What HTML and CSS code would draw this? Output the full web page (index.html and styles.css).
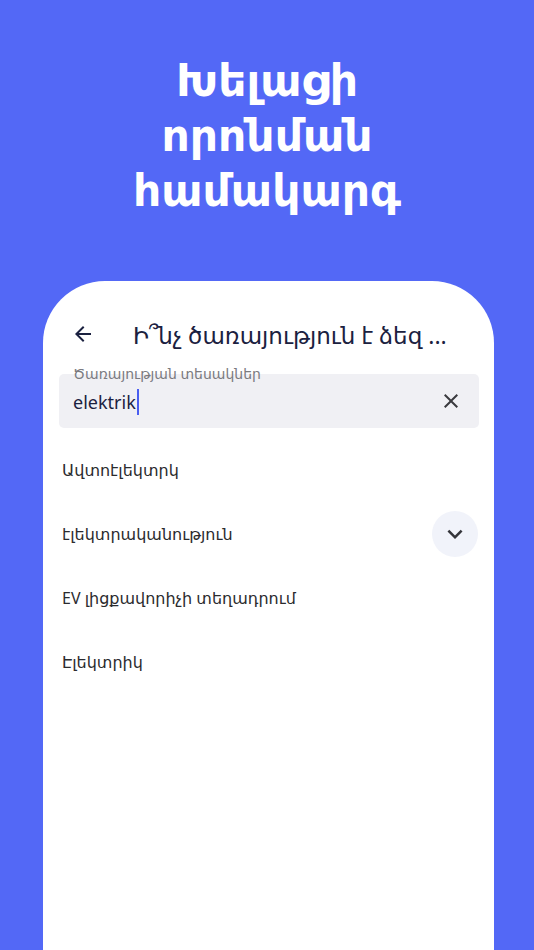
FILE: index.html
```html
<!DOCTYPE html>
<html lang="hy">
<head>
    <meta charset="UTF-8">
    <meta name="viewport" content="width=device-width, initial-scale=1.0">
    <title>Խելացի որոնման համակարգ</title>
    <link rel="stylesheet" href="styles.css">
</head>
<body>
    <h1 class="headline">Խելացի<br>որոնման<br>համակարգ</h1>

    <div class="phone">
        <div class="top-bar">
            <span class="back">
                <svg width="24" height="24" viewBox="0 0 24 24"><path d="M20 11H7.83l5.59-5.59L12 4l-8 8 8 8 1.41-1.41L7.83 13H20v-2z" fill="#1b2140"/></svg>
            </span>
            <span class="top-title">Ի՞նչ ծառայություն է ձեզ ...</span>
        </div>

        <div class="search">
            <span class="search-label">Ծառայության տեսակներ</span>
            <span class="search-value">elektrik<span class="caret"></span></span>
            <span class="clear">
                <svg width="24" height="24" viewBox="0 0 24 24"><path d="M19 6.41 17.59 5 12 10.59 6.41 5 5 6.41 10.59 12 5 17.59 6.41 19 12 13.41 17.59 19 19 17.59 13.41 12z" fill="#3a3a3e"/></svg>
            </span>
        </div>

        <ul class="results">
            <li>Ավտոէլեկտրկ</li>
            <li>էլեկտրականություն
                <span class="more">
                    <svg width="30" height="30" viewBox="0 0 24 24"><path d="M7.41 8.59 12 13.17l4.59-4.58L18 10l-6 6-6-6z" fill="#34343a"/></svg>
                </span>
            </li>
            <li>EV լիցքավորիչի տեղադրում</li>
            <li>Էլեկտրիկ</li>
        </ul>
    </div>
</body>
</html>
```

FILE: styles.css
```css
html, body {
    height: 100%;
}

body {
    margin: 0;
    padding: 0;
    background: #5368f6;
    font-family: "Noto Sans", "DejaVu Sans", sans-serif;
    overflow: hidden;
    display: flex;
    flex-direction: column;
}

.headline {
    margin: 0;
    padding-top: 52px;
    height: 281px;
    flex-shrink: 0;
    box-sizing: border-box;
    text-align: center;
    color: #fff;
    font-size: 44px;
    line-height: 55px;
    font-weight: 600;
}

.phone {
    flex: 1;
    margin: 0 40px 0 43px;
    background: #fff;
    border-radius: 62px 62px 0 0;
    padding: 0 15px 0 16px;
}

.top-bar {
    display: flex;
    align-items: center;
    height: 106px;
}

.back {
    display: flex;
    width: 24px;
    height: 24px;
    margin-left: 12px;
}

.top-title {
    margin-left: 38px;
    font-size: 23px;
    color: #1b2140;
    white-space: nowrap;
    padding-top: 2px;
}

.search {
    position: relative;
    display: flex;
    align-items: center;
    height: 54px;
    background: #f0f0f4;
    border-radius: 5px;
    padding: 0 16px 0 14px;
    margin-top: -13px;
}

.search-label {
    position: absolute;
    left: 14px;
    top: -9px;
    font-size: 14px;
    color: #7b7b80;
    line-height: 18px;
}

.search-value {
    flex: 1;
    font-size: 18px;
    color: #1b2140;
    display: flex;
    align-items: center;
    padding-top: 2px;
}

.caret {
    display: inline-block;
    width: 2px;
    height: 26px;
    background: #4a5ef0;
    margin-left: 1px;
}

.clear {
    display: flex;
}

.results {
    list-style: none;
    margin: 10px 0 0;
    padding: 0;
}

.results li {
    display: flex;
    align-items: center;
    justify-content: space-between;
    height: 64px;
    padding-left: 3px;
    font-size: 16px;
    color: #2b2b2e;
}

.more {
    display: flex;
    align-items: center;
    justify-content: center;
    width: 46px;
    height: 46px;
    border-radius: 50%;
    background: #f1f3fa;
    margin-right: 1px;
}
```
